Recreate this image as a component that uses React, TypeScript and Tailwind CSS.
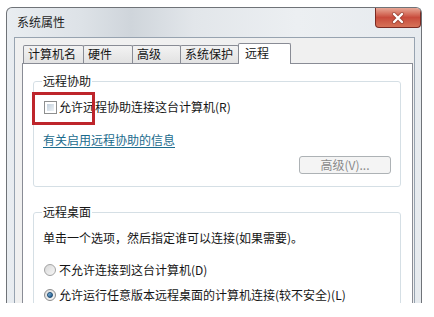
import React from "react";

function Tab({ label, w, selected }: { label: string; w: string; selected?: boolean }) {
  if (selected) {
    return (
      <div
        className={`${w} h-[21px] -mb-[1px] -ml-[1px] relative z-10 bg-white border border-b-0 border-[#898c95] rounded-t-[2px] pl-[6px] pt-[1px] leading-[16px]`}
      >
        {label}
      </div>
    );
  }
  return (
    <div
      className={`${w} h-[18px] -ml-[1px] first:ml-0 border border-b-0 border-[#898c95] rounded-t-[2px] bg-gradient-to-b from-[#f3f3f3] to-[#e2e2e2] pl-[4px] leading-[16px]`}
    >
      {label}
    </div>
  );
}

export default function App() {
  return (
    <div className="relative w-[434px] h-[317px] overflow-hidden bg-white text-[12px] text-[#151515] font-['Noto_Sans_CJK_SC','Microsoft_YaHei',sans-serif]">
      <div className="ml-[6px] mt-[7px] w-[416px] h-[296px] overflow-hidden flex flex-col border border-b-0 border-[#6f7378] rounded-t-[6px] bg-[linear-gradient(to_right,#e9edf1_0%,#dde2e7_18%,#cfd5db_30%,#e2e6ea_45%,#eceff2_70%,#e6eaee_100%)]">
        {/* title bar */}
        <div className="h-[29px] flex justify-between items-start shrink-0">
          <div className="pl-[10px] pt-[6px] leading-[16px] text-[#1e1e1e]">系统属性</div>
          <div className="w-[46px] h-[20px] rounded-b-[4px] border border-t-0 border-[#7a2a22] bg-gradient-to-b from-[#e7a796] via-[#c84b3c] to-[#d67258] flex items-center justify-center">
            <svg width="14" height="12" viewBox="0 0 14 12">
              <path d="M3 2 L11 10 M11 2 L3 10" stroke="#6b2a20" strokeWidth="4" strokeLinecap="round" opacity="0.45" />
              <path d="M3 2 L11 10 M11 2 L3 10" stroke="#ffffff" strokeWidth="2.4" strokeLinecap="round" />
            </svg>
          </div>
        </div>
        {/* client area */}
        <div className="ml-[7px] mr-[6px] flex-1 flex flex-col bg-[#f0f0f0] border border-b-0 border-[#97a3b0] pl-[7px] pr-[1px] pt-[5px]">
          <div className="h-[20px] flex items-end pl-[1px] shrink-0">
            <Tab label="计算机名" w="w-[61px]" />
            <Tab label="硬件" w="w-[50px]" />
            <Tab label="高级" w="w-[49px]" />
            <Tab label="系统保护" w="w-[59px]" />
            <Tab label="远程" w="w-[53px]" selected />
          </div>
          <div className="flex-1 bg-white border border-b-0 border-[#898c95] pt-[9px] pl-[10px] pr-[11px]">
            <fieldset className="border border-[#d5dfe5] rounded-[3px] pl-[8px] pr-[9px] pb-[12px]">
              <legend className="px-[1px] leading-[16px]">远程协助</legend>
              <div className="mt-[10px] h-[16px] flex items-center">
                <div className="ml-[2px] w-[13px] h-[13px] border border-[#8e8f8f] bg-white p-[2px]">
                  <div className="w-full h-full bg-gradient-to-br from-[#c3d0dc] to-[#eef3f7]" />
                </div>
                <span className="ml-[2px] leading-[16px]">允许远程协助连接这台计算机(R)</span>
              </div>
              <div className="mt-[17px] h-[16px] leading-[16px] ml-[1px]">
                <span className="text-[#1b6b8d] underline underline-offset-2">有关启用远程协助的信息</span>
              </div>
              <div className="mt-[8px] flex justify-end">
                <div className="w-[92px] h-[18px] border border-[#adb2b5] rounded-[3px] bg-[#f4f4f4] flex items-center justify-center text-[#8a8a8a] leading-[16px]">
                  高级(V)...
                </div>
              </div>
            </fieldset>
            <fieldset className="mt-[17px] border border-[#d5dfe5] rounded-[3px] pl-[8px] pr-[9px] pb-[12px]">
              <legend className="px-[1px] leading-[16px]">远程桌面</legend>
              <div className="mt-[10px] h-[16px] leading-[16px] ml-[1px]">单击一个选项，然后指定谁可以连接(如果需要)。</div>
              <div className="mt-[16px] h-[16px] flex items-center">
                <div className="ml-[2px] w-[12px] h-[12px] rounded-full border border-[#a3a3a3] bg-gradient-to-br from-[#d8d8d8] to-[#f7f7f7]" />
                <span className="ml-[3px] leading-[16px]">不允许连接到这台计算机(D)</span>
              </div>
              <div className="mt-[9px] h-[16px] flex items-center">
                <div className="ml-[2px] w-[12px] h-[12px] rounded-full border border-[#8c8c8c] bg-gradient-to-br from-[#dcdcdc] to-[#f7f7f7] flex items-center justify-center">
                  <div className="w-[6px] h-[6px] rounded-full bg-gradient-to-br from-[#8cc4ea] to-[#164f82] border border-[#1b4a72]" />
                </div>
                <span className="ml-[3px] leading-[16px]">允许运行任意版本远程桌面的计算机连接(较不安全)(L)</span>
              </div>
            </fieldset>
          </div>
        </div>
      </div>
      <div className="absolute left-[32px] top-[92px] w-[63px] h-[33px] border-[3px] border-[#be252b]" />
    </div>
  );
}
